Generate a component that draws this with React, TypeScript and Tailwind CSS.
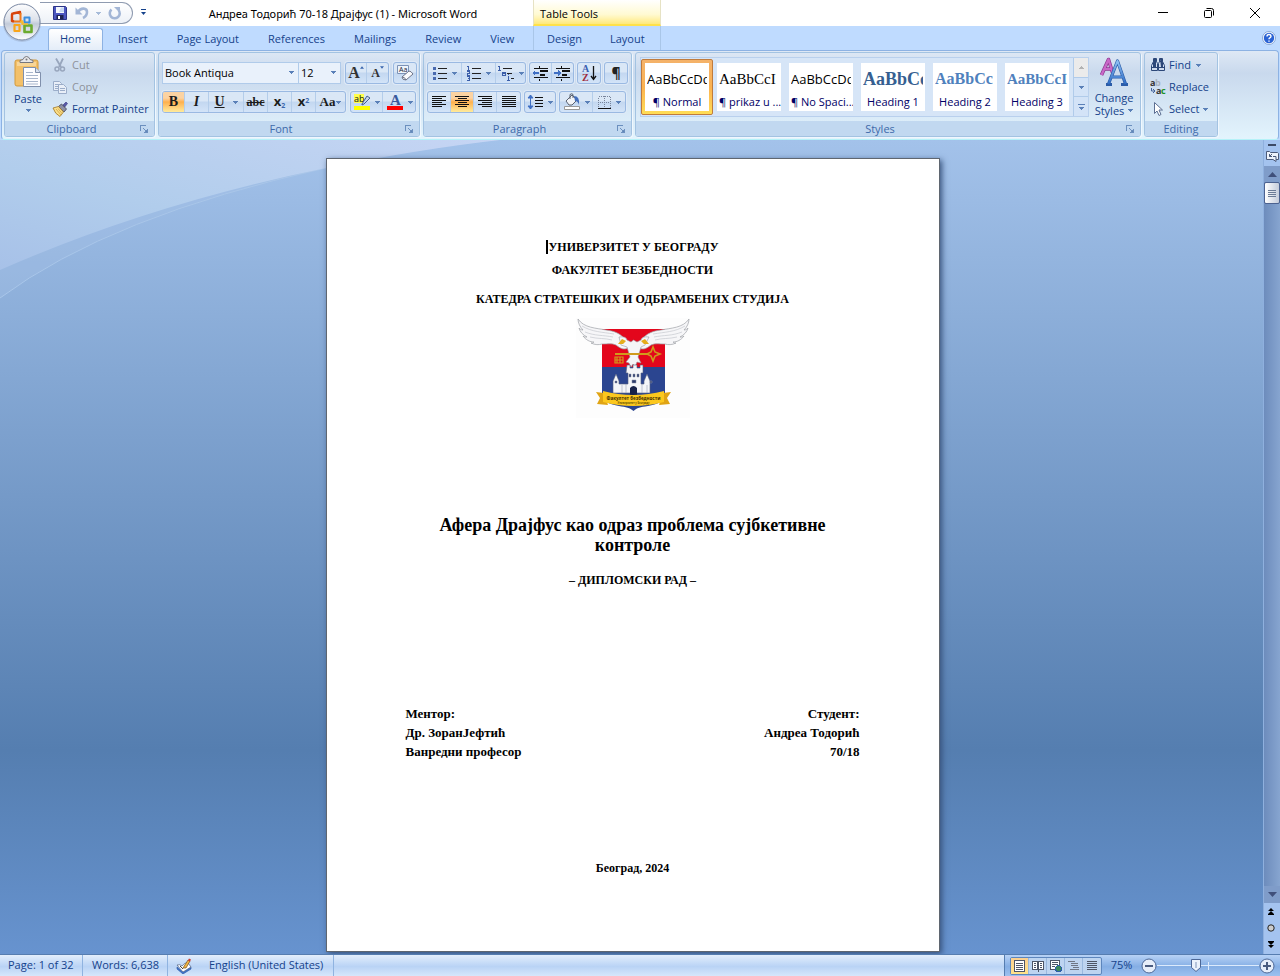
import React from 'react';

const UI_FONT = "font-['Open_Sans','Noto_Sans',sans-serif]";

/* ---------- shared bits ---------- */

const Caret = ({ className = '' }: { className?: string }) => (
  <svg className={`w-[5px] h-[3px] shrink-0 ${className}`} viewBox="0 0 5 3" fill="#5a80b8" shapeRendering="crispEdges">
    <path d="M0 0h5v1H4v1H3v1H2V2H1V1H0z" />
  </svg>
);

interface GroupProps {
  label: string;
  launcher?: boolean;
  className?: string;
  children: React.ReactNode;
}

const Group: React.FC<GroupProps> = ({ label, launcher = true, className = '', children }) => (
  <section
    aria-label={label}
    className={`flex flex-col shrink-0 h-[85px] rounded-[3px] border border-[#a3c3e2] shadow-[1px_1px_0_#f0f7fe] overflow-hidden ${className}`}
  >
    <div className="flex-1 min-h-0">{children}</div>
    <div className="flex items-center h-[15px] bg-[#c1d8f0] text-[#3e6aaa] text-[11px] leading-[15px]">
      <span className="flex-1 text-center">{label}</span>
      {launcher && (
        <button aria-label={`${label} options`} className="w-3 h-3 mr-1">
          <svg viewBox="0 0 12 12" className="w-3 h-3" fill="none" stroke="#6b8fbe" shapeRendering="crispEdges">
            <path d="M2.500 8V2.500H8M5.500 9.500h4v-4M5 5l4 4" />
            <path d="M7 7h2v2H7z" fill="#5f86b8" />
          </svg>
        </button>
      )}
    </div>
  </section>
);

const ButtonBar = ({ children }: { children: React.ReactNode }) => (
  <div className="flex h-[22px] border border-[#9ab9e2] rounded-[3px] overflow-hidden divide-x divide-[#b4cdea] bg-gradient-to-b from-[#dae7f6] from-45% via-[#c3d7f0] via-50% to-[#d3e4f8] shadow-[0_0_0_1px_#dfeaf7]">
    {children}
  </div>
);

interface ToolProps {
  label: string;
  active?: boolean;
  caret?: boolean;
  className: string;
  children: React.ReactNode;
}

const Tool: React.FC<ToolProps> = ({ label, active, caret, className, children }) => (
  <button
    aria-label={label}
    title={label}
    className={`flex items-center justify-center gap-1 shrink-0 ${className} ${active ? 'bg-gradient-to-b from-[#fcd3a2] from-30% via-[#fdb04d] via-50% to-[#feeb9b]' : ''}`}
  >
    {children}
    {caret && <Caret />}
  </button>
);

/* ---------- icons ---------- */

const Lines = ({ rows }: { rows: [number, number][] }) => (
  <svg className="w-4 h-[14px]" viewBox="0 0 16 14" shapeRendering="crispEdges" fill="#111">
    {rows.map(([x, w], i) => (
      <rect key={i} x={x} y={1 + i * 2} width={w} height="1" />
    ))}
  </svg>
);

const LEFT: [number, number][] = [[1, 14], [1, 10], [1, 14], [1, 10], [1, 14], [1, 10]];
const CENTER: [number, number][] = [[1, 14], [4, 9], [1, 14], [4, 9], [1, 14], [4, 9]];
const RIGHT: [number, number][] = [[1, 14], [5, 10], [1, 14], [5, 10], [1, 14], [5, 10]];
const FULL: [number, number][] = [[1, 14], [1, 14], [1, 14], [1, 14], [1, 14], [1, 14]];

const OfficeLogo = () => (
  <svg viewBox="0 0 44 44" className="w-11 h-11">
    <defs>
      <linearGradient id="orb" x1="0" y1="0" x2="0" y2="1">
        <stop offset="0" stopColor="#fdfdfe" />
        <stop offset="0.45" stopColor="#dce1ea" />
        <stop offset="0.55" stopColor="#c3cbd9" />
        <stop offset="1" stopColor="#ffffff" />
      </linearGradient>
    </defs>
    <circle cx="22" cy="23" r="19" fill="#8d9bb3" opacity="0.35" />
    <circle cx="22" cy="22" r="18" fill="url(#orb)" stroke="#7d8ba5" />
    <g fill="none" strokeLinejoin="round">
      <path d="M20 14.500V12l-7 1.500q-1 0-1 1V21l2 .500" stroke="#d8430c" strokeWidth="2.400" />
      <path d="M14 21.500h6.500V13" stroke="#f07a1c" strokeWidth="2" />
      <path d="M24.500 17.500h5v5h-5z" stroke="#3b8ede" strokeWidth="2" />
      <path d="M14.500 25h5v6h-5z" stroke="#f8a51b" strokeWidth="2.200" />
      <path d="M24.500 25.500h7v6.500h-7z" stroke="#6bab2f" strokeWidth="2.600" />
    </g>
    <path d="M20 22h3v3M22 20v4h6" fill="none" stroke="#f5b933" strokeWidth="1.500" />
  </svg>
);

const SaveIcon = () => (
  <svg viewBox="0 0 16 16" className="w-4 h-4">
    <path d="M1.500 1.500h12l1 1v12h-13z" fill="#4c56c0" stroke="#2c3487" />
    <path d="M4 2h8v6H4z" fill="#f4f7fd" />
    <path d="M9 2.500h3V7H7z" fill="#c8d8f2" />
    <path d="M4.500 10h7v4.500h-7z" fill="#1d2250" />
    <path d="M6 11h2v3H6z" fill="#fff" />
  </svg>
);

const UndoIcon = () => (
  <svg viewBox="0 0 16 16" className="w-4 h-4" fill="none">
    <path d="M4 7c3-5 9-4 9 0 0 3-2 5-4 6" stroke="#a3b6d6" strokeWidth="2.600" />
    <path d="M1.500 2.500v7h7z" fill="#a3b6d6" />
  </svg>
);

const RedoIcon = () => (
  <svg viewBox="0 0 16 16" className="w-4 h-4" fill="none">
    <path d="M4.500 4.500A5 5 0 1 0 11.500 5" stroke="#a3b6d6" strokeWidth="2.600" />
    <path d="M7 2h6v6z" fill="#a3b6d6" />
  </svg>
);

const PasteIcon = () => (
  <svg viewBox="0 0 28 32" className="w-7 h-8">
    <rect x="1" y="4" width="23" height="26" rx="2" fill="#f3c069" stroke="#d39a3c" />
    <path d="M3 6h19v4H3z" fill="#f8d596" />
    <path d="M6 6.500V4.500l3-1q1-3 3.500-3t3.500 3l3 1v2z" fill="#e8e8ea" stroke="#77777c" />
    <circle cx="12.500" cy="3.500" r="1" fill="#77777c" />
    <path d="M9.500 11.500h12l5 5v14h-17z" fill="#fdfdff" stroke="#8090ac" />
    <path d="M21.500 11.500v5h5" fill="#d6e0f0" stroke="#8090ac" />
    <path d="M12 16.500h7M12 19.500h12M12 22.500h12M12 25.500h12M12 28h12" stroke="#a8b6cc" />
  </svg>
);

const CutIcon = () => (
  <svg viewBox="0 0 16 16" className="w-4 h-4" fill="none" stroke="#98a6bd">
    <path d="M4 1.500l5 8.500M11 1.500L7 10" strokeWidth="1.800" />
    <circle cx="5" cy="12" r="2" strokeWidth="1.500" />
    <circle cx="10.500" cy="12" r="2" strokeWidth="1.500" />
  </svg>
);

const CopyIcon = () => (
  <svg viewBox="0 0 16 16" className="w-4 h-4" fill="#e9eff8" stroke="#9badc9">
    <path d="M1.500 2.500h6l2 2v7h-8z" />
    <path d="M3 5.500h4M3 7.500h4M3 9.500h3" />
    <path d="M6.500 5.500h5l3 3v6h-8z" />
    <path d="M8 9.500h5M8 11.500h5" />
  </svg>
);

const PainterIcon = () => (
  <svg viewBox="0 0 16 16" className="w-4 h-4">
    <path d="M10 5l4-4 1.500 1.500L12 7z" fill="#5858a8" stroke="#38387c" strokeWidth="0.600" />
    <path d="M6.500 5.500l3-2.500 5 5-2.500 3z" fill="#8d90a4" stroke="#3c3f52" strokeWidth="0.800" />
    <path d="M1 7l5.500-1.500 5 5.500L8 15.500Q3 13 1 7z" fill="#fbe08a" stroke="#a07522" strokeWidth="0.800" />
    <path d="M4 8l5 6M6 7.500l4 5" stroke="#c9983a" strokeWidth="0.700" />
  </svg>
);

const EraserIcon = () => (
  <svg viewBox="0 0 18 18" className="w-[18px] h-[18px]">
    <path d="M1.500 1.500h11v8h-11z" fill="#eef4fc" stroke="#7c93b7" />
    <text x="3" y="8" fontSize="7" fill="#223" fontFamily="Open Sans, sans-serif">Aa</text>
    <path d="M6 13l7-6q2 0 4 3l-7 6q-4 0-4-3z" fill="#fbfbfd" stroke="#6e7487" />
    <path d="M6 13q3 0 4 3" fill="none" stroke="#6e7487" />
  </svg>
);

const HighlightIcon = () => (
  <svg viewBox="0 0 18 18" className="w-[18px] h-[18px]">
    <path d="M1 1h10v9H1z" fill="#ffff4d" />
    <text x="1" y="9" fontSize="9" fill="#111" fontFamily="Open Sans, sans-serif">ab</text>
    <path d="M9 11l5-8 3 2-6 6-2 1z" fill="#c5d4ec" stroke="#45608f" />
    <path d="M1 13h16v4H1z" fill="#ffff00" />
  </svg>
);

const FontColorIcon = () => (
  <svg viewBox="0 0 18 18" className="w-[18px] h-[18px]">
    <text x="4" y="12" fontSize="15" fontWeight="bold" fill="#38599c" fontFamily="Liberation Serif, serif">A</text>
    <path d="M1 13h16v4H1z" fill="#ff0000" />
  </svg>
);

const BulletsIcon = () => (
  <svg viewBox="0 0 16 16" className="w-4 h-4" shapeRendering="crispEdges">
    <path d="M1 2h3v3H1zM1 7h3v3H1zM1 12h3v3H1z" fill="#4a6bb0" />
    <path d="M6 3h9v1H6zM6 8h9v1H6zM6 13h9v1H6z" fill="#222" />
  </svg>
);

/* digits are only a few pixels high, so they are drawn as strokes */
const NumberingIcon = () => (
  <svg viewBox="0 0 16 16" className="w-4 h-4" shapeRendering="crispEdges">
    <path d="M2.500 1v4M1 1.500h2M1 5.500h3M1 6.500h2.500v2H1.500v2H4M1 11.500h2.500v4H1M1.500 13.500h2" fill="none" stroke="#3b5ea9" />
    <path d="M6 3h9v1H6zM6 8h9v1H6zM6 13h9v1H6z" fill="#222" />
  </svg>
);

const MultilevelIcon = () => (
  <svg viewBox="0 0 18 16" className="w-[18px] h-4" shapeRendering="crispEdges">
    <path d="M2.500 1v4M1 1.500h2M1 5.500h3M5 7.500h3v3H5.500v-2H8M11.500 9v1M11.500 11v4M10 15.500h3" fill="none" stroke="#3b5ea9" />
    <path d="M6 3h9v1H6zM10 8h5v1h-5zM14 13h3v1h-3z" fill="#222" />
  </svg>
);

const IndentIcon = ({ right }: { right?: boolean }) => (
  <svg viewBox="0 0 17 15" className="w-[17px] h-[15px]" shapeRendering="crispEdges">
    <path d="M2 2h14v1H2zM8 4h8v2H8zM8 8h5v2H8zM2 11h14v1H2zM7 0h1v2H7zM7 13h1v2H7z" fill="#111" />
    {right ? (
      <path d="M7 7L4 4v2H0v2h4v2z" fill="#3f6fc4" />
    ) : (
      <path d="M0 7l3-3v2h4v2H3v2z" fill="#3f6fc4" />
    )}
  </svg>
);

const SortIcon = () => (
  <svg viewBox="0 0 17 18" className="w-[17px] h-[18px]">
    <g fontSize="10" fontWeight="bold" fontFamily="Liberation Serif, serif">
      <text x="1" y="8" fill="#3a5fb0">A</text>
      <text x="1" y="17" fill="#a02c3c">Z</text>
    </g>
    <path d="M12.500 2v13M10 12l2.500 3.500L15 12" fill="none" stroke="#111" strokeWidth="1.300" />
  </svg>
);

const SpacingIcon = () => (
  <svg viewBox="0 0 17 16" className="w-[17px] h-4">
    <path d="M3.500 1v14M1 4l2.500-3L6 4zM1 12l2.500 3L6 12z" fill="#3f6fc4" stroke="#3f6fc4" />
    <path d="M8 3h8v1H8zM8 6h8v1H8zM8 9h8v1H8zM8 12h8v1H8z" fill="#111" />
  </svg>
);

const ShadingIcon = () => (
  <svg viewBox="0 0 18 18" className="w-[18px] h-[18px]">
    <path d="M3 8l6-6 5 5-5 5H6z" fill="#f2f4f8" stroke="#59616f" />
    <path d="M7 6V1.500q2-1.500 3 0V5" fill="none" stroke="#59616f" />
    <path d="M11 3q6 0 5 9-1-4-4-4z" fill="#4470bd" />
    <path d="M1.500 13.500h15v3h-15z" fill="#fff" stroke="#999" />
  </svg>
);

const BordersIcon = () => (
  <svg viewBox="0 0 15 15" className="w-[15px] h-[15px]" shapeRendering="crispEdges">
    <path d="M1.500 1.500h12v12h-12zM7.500 1v12M1 7.500h12" fill="none" stroke="#77839a" strokeDasharray="1 1" />
    <path d="M1 13h13v1H1z" fill="#111" />
  </svg>
);

const FindIcon = () => (
  <svg viewBox="0 0 16 16" className="w-4 h-4" fill="#cfdbed" stroke="#2c4778">
    <path d="M3.500 1.500h3v3l1 2v7h-6v-5l2-4zM12.500 1.500h-3v3l-1 2v7h6v-5l-2-4z" />
    <path d="M3.500 4.500h3M9.500 4.500h3M7 7.500h2M1.500 10.500h6M8.500 10.500h6" />
    <path d="M4 2h2v8H3V6zM10 2h2l1 4v4h-2z" fill="#2c4778" stroke="none" />
  </svg>
);

const ReplaceIcon = () => (
  <svg viewBox="0 0 16 16" className="w-4 h-4">
    <g fontSize="9" fontWeight="bold" fontFamily="Open Sans, sans-serif">
      <text x="0" y="7" fill="#333">a</text>
      <text x="5" y="7" fill="#aab2bf">b</text>
      <text x="6" y="15" fill="#333">a</text>
      <text x="11" y="15" fill="#1d8f26">c</text>
    </g>
    <path d="M1.500 9v3H4M3 10l2 2-2 2" fill="none" stroke="#44639a" />
  </svg>
);

const SelectIcon = () => (
  <svg viewBox="0 0 16 16" className="w-4 h-4">
    <path d="M4.500 1.500v11l2.500-2.500 2 4.500 2-1-2-4.500h3.500z" fill="#fff" stroke="#5c6f92" />
  </svg>
);

const ChangeStylesIcon = () => (
  <svg viewBox="0 0 30 30" className="w-[30px] h-[30px]">
    <defs>
      <linearGradient id="blueA" x1="0" y1="0" x2="0" y2="1">
        <stop offset="0" stopColor="#8fc0f5" />
        <stop offset="1" stopColor="#2e6cc4" />
      </linearGradient>
    </defs>
    <g fill="none" strokeLinejoin="round">
      <path d="M2.500 18L9.500 2.500l4 13M6 12h6" stroke="#8d3a90" strokeWidth="3.600" />
      <path d="M2.500 18L9.500 2.500l4 13M6 12h6" stroke="#c968c8" strokeWidth="2.200" />
      <path d="M9.500 27L18.500 4l8 23M13 20h11M7 27.500h6M22 27.500h7" stroke="#2b5ca8" strokeWidth="3.200" />
      <path d="M9.500 27L18.500 4l8 23M13 20h11" stroke="url(#blueA)" strokeWidth="2" />
    </g>
  </svg>
);

const Wing = () => (
  <g>
    <path d="M50 22C44 15 38 13 30 12 20 10 8 10 2 1c0 4 2 8 5 11-2 0-3-1-4-2 1 4 4 7 8 9-2 0-3 0-4-1 3 4 7 6 11 6-1 1-2 1-3 1 4 2 8 2 11 1 6 0 10-1 14 1 5 4 8 5 12 3z" fill="#f6f6f8" stroke="#9ea0a6" strokeWidth="0.700" />
    <path d="M6 8c10 6 20 6 32 8M9 14c10 4 18 3 28 5M14 19c8 2 15 1 22 3" fill="none" stroke="#c6c8ce" strokeWidth="0.700" />
  </g>
);

const Emblem = () => (
  <svg role="img" aria-label="Факултет безбедности" viewBox="0 0 114 100" className="w-[114px] h-[100px] bg-[#fdfdfd]">
    <path d="M26 11h63v40H26z" fill="#e3061c" />
    <path d="M26 49h63v26c0 9-8 11-17 13-8 1-11 2-14.500 5C54 90 50 89 43 88c-9-2-17-4-17-13z" fill="#2b4590" />
    <g>
      <Wing />
      <g transform="translate(115 0) scale(-1 1)">
        <Wing />
      </g>
    </g>
    <path d="M43 19q7-1 8 3l4 2 2.500-2 3.500 2 4-2q1-4 8-3l-4 8-4 2-3 10 3 6-4-1-2 5-2-3-2 3-2-4-3-1 4-5-3-10-6-2z" fill="#f5f5f7" stroke="#9798a0" strokeWidth="0.600" />
    <path d="M42 26l4-5 4 2-3 3zM73 26l-4-5-4 2 3 3z" fill="#e5ad1c" />
    <g fill="none" stroke="#d09a1c">
      <path d="M39 36h34" strokeWidth="2" />
      <path d="M39 39h8v6h-8zM41 39v6M44 39v6M39 42h8" strokeWidth="1.200" />
      <path d="M71 36l4-2 2-5 2 5 5 2-5 2-2 5-2-5z" fill="#e3061c" strokeWidth="1.600" />
    </g>
    <path d="M51 47h3v3h3v-3h4v3h3v-3h3v8h-2v11h3v-3l3-7 3 7v12H37V63l3-7 3 7v3h9V55h-2z" fill="#f4f5f8" stroke="#555f7c" strokeWidth="0.600" />
    <path d="M53 56h2v3h-2zM57 56h2v3h-2zM61 56h2v3h-2zM56 62h4v3h-4zM46 67v8M50 66v9M66 66v9M71 67v8M39 63h2v2h-2zM74 63h2v2h-2z" fill="#2b3a6a" stroke="#8b93a8" strokeWidth="0.500" />
    <path d="M54 77v-7q3.500-4 7 0v7z" fill="#17224a" />
    <path d="M28 75l-8-1 4 6-3 6 11 1zM87 75l8-1-4 6 3 6-11 1z" fill="#e0a414" />
    <path d="M27 73q30 8 61 0v11q-31 8-61 0z" fill="#fcc81e" />
    <text x="57.500" y="82" textAnchor="middle" fontSize="4.500" fontWeight="bold" fill="#3c2d00" fontFamily="Open Sans, sans-serif">Факултет безбедности</text>
    <text x="57.500" y="86" textAnchor="middle" fontSize="2.500" fill="#6a5200" fontFamily="Open Sans, sans-serif">Универзитет у Београду</text>
  </svg>
);

/* ---------- window chrome ---------- */

const TitleBar = () => (
  <header className="flex h-[26px] shrink-0 bg-white text-[11px] text-black">
    <div className="flex items-start w-[153px] shrink-0 pl-10 pt-[2px]">
      <div className="flex items-center h-[22px] w-[93px] pl-3 gap-[6px] border border-l-0 border-[#8f9bb0] rounded-r-full bg-gradient-to-b from-white to-[#edf1f7]">
        <button aria-label="Save"><SaveIcon /></button>
        <button aria-label="Undo" className="flex items-center gap-[6px]">
          <UndoIcon />
          <Caret className="opacity-50" />
        </button>
        <button aria-label="Repeat"><RedoIcon /></button>
      </div>
      <button aria-label="Customize Quick Access Toolbar" className="w-5 h-5 flex flex-col items-center justify-center gap-[2px]">
        <span className="w-[5px] h-px bg-[#15428b]" />
        <svg viewBox="0 0 5 3" className="w-[5px] h-[3px]"><path d="M0 0h5L2.500 3z" fill="#15428b" /></svg>
      </button>
    </div>
    <h1 className="w-[380px] shrink-0 text-center leading-7 font-['Noto_Sans',sans-serif]">Андреа Тодорић 70-18 Драјфус (1) - Microsoft Word</h1>
    <div className="w-[128px] shrink-0 pl-[6px] leading-7 bg-gradient-to-b from-white via-[#fffad2] via-60% to-[#ffe97a] border-x border-[#e6e2c4] border-b-2 border-b-[#ffe14a]">
      Table Tools
    </div>
    <div className="flex-1" />
    <div className="flex pr-[2px]">
      <button aria-label="Minimize" className="w-[46px] flex items-center justify-center">
        <svg viewBox="0 0 10 10" className="w-[10px] h-[10px]" stroke="#000"><path d="M0 4.500h10" /></svg>
      </button>
      <button aria-label="Restore" className="w-[46px] flex items-center justify-center">
        <svg viewBox="0 0 10 10" className="w-[10px] h-[10px]" fill="none" stroke="#000">
          <rect x="0.500" y="2.500" width="7" height="7" rx="1" />
          <path d="M2.500.5h5q2 0 2 2v5" />
        </svg>
      </button>
      <button aria-label="Close" className="w-[46px] flex items-center justify-center">
        <svg viewBox="0 0 10 10" className="w-[10px] h-[10px]" stroke="#000"><path d="M0 0l10 10M10 0L0 10" /></svg>
      </button>
    </div>
  </header>
);

const TABS = ['Insert', 'Page Layout', 'References', 'Mailings', 'Review', 'View'];

const TabRow = () => (
  <nav className="flex h-6 shrink-0 bg-[#bfdbff] text-[11px] text-[#15428b]">
    <div className="flex gap-px w-[533px] shrink-0 pl-12">
      <button className="h-[22px] mt-[2px] w-[55px] shrink-0 rounded-t-[3px] border border-b-0 border-[#8db2e3] bg-gradient-to-b from-white to-[#e4edf8]">Home</button>
      {TABS.map((tab) => (
        <button key={tab} className="px-[14px] pt-[2px] whitespace-nowrap">{tab}</button>
      ))}
    </div>
    <div className="flex gap-[2px] w-[128px] shrink-0 border-x border-[#a9c6e8]">
      <button className="px-[13px] pt-[2px]">Design</button>
      <button className="px-[13px] pt-[2px]">Layout</button>
    </div>
    <div className="flex-1" />
    <button aria-label="Help" className="w-[22px] flex items-center justify-center">
      <svg viewBox="0 0 14 14" className="w-[14px] h-[14px]">
        <circle cx="7" cy="7" r="6.500" fill="#fff" stroke="#8aa9d6" />
        <circle cx="7" cy="7" r="5.200" fill="#2a62d4" />
        <path d="M5 5.500q0-2 2-2t2 1.800q0 1-1.200 1.600-.8.400-.8 1.300M7 9.500v1.300" fill="none" stroke="#fff" strokeWidth="1.400" />
      </svg>
    </button>
  </nav>
);

/* ---------- ribbon groups ---------- */

const Clipboard = () => (
  <Group label="Clipboard" className="w-[151px]">
    <div className="flex">
      <button className="w-[46px] flex flex-col items-center pt-[3px] leading-4">
        <PasteIcon />
        <span className="mt-[3px]">Paste</span>
        <Caret className="mt-[2px]" />
      </button>
      <div className="flex flex-col pt-px pl-px">
        <button disabled className="flex items-center gap-1 h-[22px] text-[#8d929b]"><CutIcon />Cut</button>
        <button disabled className="flex items-center gap-1 h-[22px] text-[#8d929b]"><CopyIcon />Copy</button>
        <button className="flex items-center gap-1 h-[22px] whitespace-nowrap"><PainterIcon />Format Painter</button>
      </div>
    </div>
  </Group>
);

const Combo = ({ label, value, options, className }: { label: string; value: string; options: string[]; className: string }) => (
  <div className={`relative h-[22px] border border-[#b0cbea] bg-[#e9f1fb] ${className}`}>
    <select aria-label={label} defaultValue={value} className="appearance-none w-full h-full pl-[2px] pr-4 bg-transparent text-black outline-none">
      {options.map((o) => <option key={o}>{o}</option>)}
    </select>
    <Caret className="absolute right-1 top-2 pointer-events-none" />
  </div>
);

const FontGroup = () => (
  <Group label="Font" className="w-[262px]">
    <div className="flex flex-col gap-[7px] pl-[3px] pt-[9px]">
      <div className="flex">
        <Combo label="Font" value="Book Antiqua" options={['Book Antiqua', 'Calibri', 'Cambria']} className="w-[137px]" />
        <Combo label="Font Size" value="12" options={['10', '11', '12', '14']} className="w-[42px] border-l-0" />
        <div className="flex gap-1 pl-1">
          <ButtonBar>
            <Tool label="Grow Font" className="w-[21px]">
              <span className="font-['Liberation_Serif',serif] font-bold text-base leading-5 text-[#333]">A</span>
              <svg viewBox="0 0 5 3" className="w-1 h-[3px] -ml-1 mb-3"><path d="M0 3h5L2.500 0z" fill="#3a66ad" /></svg>
            </Tool>
            <Tool label="Shrink Font" className="w-[21px]">
              <span className="font-['Liberation_Serif',serif] font-bold text-xs leading-5 text-[#333]">A</span>
              <svg viewBox="0 0 5 3" className="w-1 h-[3px] -ml-1 mb-3"><path d="M0 0h5L2.500 3z" fill="#3a66ad" /></svg>
            </Tool>
          </ButtonBar>
          <ButtonBar>
            <Tool label="Clear Formatting" className="w-[22px]"><EraserIcon /></Tool>
          </ButtonBar>
        </div>
      </div>
      <div className="flex gap-1 font-['Liberation_Serif',serif] text-[#1c1c1c]">
        <ButtonBar>
          <Tool label="Bold" active className="w-[22px]"><b className="text-sm">B</b></Tool>
          <Tool label="Italic" className="w-6"><i className="text-sm font-bold">I</i></Tool>
          <Tool label="Underline" caret className="w-[35px]"><u className="text-sm font-bold pr-1">U</u></Tool>
          <Tool label="Strikethrough" className="w-6"><s className="text-xs font-bold">abc</s></Tool>
          <Tool label="Subscript" className="w-6">
            <span className="font-['Open_Sans',sans-serif] font-bold text-[13px]">x<sub className="text-[7px] text-[#3a66ad]">2</sub></span>
          </Tool>
          <Tool label="Superscript" className="w-6">
            <span className="font-['Open_Sans',sans-serif] font-bold text-[13px]">x<sup className="text-[7px] text-[#3a66ad]">2</sup></span>
          </Tool>
          <Tool label="Change Case" caret className="w-[29px]"><span className="text-[13px] font-bold -mr-[3px]">Aa</span></Tool>
        </ButtonBar>
        <ButtonBar>
          <Tool label="Text Highlight Color" caret className="w-8"><HighlightIcon /></Tool>
          <Tool label="Font Color" caret className="w-8"><FontColorIcon /></Tool>
        </ButtonBar>
      </div>
    </div>
  </Group>
);

const Paragraph = () => (
  <Group label="Paragraph" className="w-[209px]">
    <div className="flex flex-col gap-[7px] pl-[3px] pt-[9px]">
      <div className="flex gap-[3px]">
        <ButtonBar>
          <Tool label="Bullets" caret className="w-[34px]"><BulletsIcon /></Tool>
          <Tool label="Numbering" caret className="w-[34px]"><NumberingIcon /></Tool>
          <Tool label="Multilevel List" caret className="w-[29px]"><MultilevelIcon /></Tool>
        </ButtonBar>
        <ButtonBar>
          <Tool label="Decrease Indent" className="w-[22px]"><IndentIcon /></Tool>
          <Tool label="Increase Indent" className="w-[21px]"><IndentIcon right /></Tool>
        </ButtonBar>
        <ButtonBar>
          <Tool label="Sort" className="w-[22px]"><SortIcon /></Tool>
        </ButtonBar>
        <ButtonBar>
          <Tool label="Show/Hide" className="w-[22px]"><span className="text-sm text-[#222] font-bold">¶</span></Tool>
        </ButtonBar>
      </div>
      <div className="flex gap-[3px]">
        <ButtonBar>
          <Tool label="Align Left" className="w-[23px]"><Lines rows={LEFT} /></Tool>
          <Tool label="Center" active className="w-[23px]"><Lines rows={CENTER} /></Tool>
          <Tool label="Align Right" className="w-[23px]"><Lines rows={RIGHT} /></Tool>
          <Tool label="Justify" className="w-[23px]"><Lines rows={FULL} /></Tool>
        </ButtonBar>
        <ButtonBar>
          <Tool label="Line Spacing" caret className="w-[30px]"><SpacingIcon /></Tool>
        </ButtonBar>
        <ButtonBar>
          <Tool label="Shading" caret className="w-[33px]"><ShadingIcon /></Tool>
          <Tool label="Borders" caret className="w-[32px]"><BordersIcon /></Tool>
        </ButtonBar>
      </div>
    </div>
  </Group>
);

const STYLES = [
  { name: '¶ Normal', sample: 'AaBbCcDd', look: "text-[13px] text-black", active: true },
  { name: '¶ prikaz u ...', sample: 'AaBbCcI', look: "text-[15px] text-black font-['Liberation_Serif',serif]" },
  { name: '¶ No Spaci...', sample: 'AaBbCcDd', look: "text-[13px] text-black" },
  { name: 'Heading 1', sample: 'AaBbCc', look: "text-lg font-bold text-[#365f91] font-['Liberation_Serif',serif]" },
  { name: 'Heading 2', sample: 'AaBbCc', look: "text-base font-bold text-[#4f81bd] font-['Liberation_Serif',serif]" },
  { name: 'Heading 3', sample: 'AaBbCcI', look: "text-[15px] font-bold text-[#4f81bd] font-['Liberation_Serif',serif]" },
];

const StylesGroup = () => (
  <Group label="Styles" className="w-[506px]">
    <div className="flex pl-1 pt-[4px]">
      <div className="flex border border-[#b9d0ed] bg-[#d6e5f7] h-[60px]">
        {STYLES.map((s) => (
          <button
            key={s.name}
            className={`w-[72px] h-[56px] mt-px p-[3px] rounded-[2px] border ${s.active ? 'border-[#c07b3c] bg-gradient-to-b from-[#f4b26a] via-[#fbb250] to-[#ffdd55]' : 'border-transparent'}`}
          >
            <span className="flex flex-col h-full px-[2px] bg-white overflow-hidden">
              <span className={`h-8 pt-px leading-[30px] text-left overflow-hidden whitespace-nowrap ${s.look}`}>{s.sample}</span>
              <span className="text-[11px] leading-[14px] text-center text-[#000066] whitespace-nowrap">{s.name}</span>
            </span>
          </button>
        ))}
        <div className="flex flex-col w-[15px] border-l border-[#b0cbea] divide-y divide-[#b0cbea]">
          <button aria-label="Scroll up" className="flex-1 flex items-center justify-center bg-[#ebebeb]"><Caret className="rotate-180 opacity-50 grayscale" /></button>
          <button aria-label="Scroll down" className="flex-1 flex items-center justify-center bg-[#d3e3f7]"><Caret /></button>
          <button aria-label="More styles" className="flex-1 flex flex-col gap-[2px] items-center justify-center bg-[#d3e3f7]">
            <span className="w-[7px] h-px bg-[#5a80b8]" />
            <Caret />
          </button>
        </div>
      </div>
      <button className="flex-1 flex flex-col items-center pr-px leading-[13px]">
        <ChangeStylesIcon />
        <span className="mt-1">Change</span>
        <span className="flex items-center gap-1">Styles<Caret /></span>
      </button>
    </div>
  </Group>
);

const Editing = () => (
  <Group label="Editing" launcher={false} className="w-[74px]">
    <div className="flex flex-col pt-px pl-[5px]">
      <button className="flex items-center gap-[3px] h-[22px]"><FindIcon />Find<Caret className="ml-[2px]" /></button>
      <button className="flex items-center gap-[3px] h-[22px]"><ReplaceIcon />Replace</button>
      <button className="flex items-center gap-[3px] h-[22px]"><SelectIcon />Select<Caret className="ml-px" /></button>
    </div>
  </Group>
);

const Ribbon = () => (
  <div className="shrink-0 h-[90px] px-px bg-[#bfdbff]">
    <div className="flex gap-[3px] h-[90px] pl-[2px] pt-px border border-[#8db2e3] border-b-[#b5f2f8] rounded-[4px] text-[11px] text-[#15428b] bg-gradient-to-b from-[#dee8f5] via-[#c9d9ed] via-25% to-[#e3f4fd]">
      <Clipboard />
      <FontGroup />
      <Paragraph />
      <StylesGroup />
      <Editing />
    </div>
  </div>
);

/* ---------- document ---------- */

const SIGNATURES = [
  ['Ментор:', 'Студент:'],
  ['Др. ЗоранЈефтић', 'Андреа Тодорић'],
  ['Ванредни професор', '70/18'],
];

const Page = () => (
  <article className="w-[614px] h-[794px] shrink-0 mt-[18px] px-[79px] pt-[77px] bg-white border border-[#5f6670] shadow-[2px_2px_6px_#35507a] font-['Liberation_Serif',serif] font-bold text-xs leading-[23px] text-center text-black">
    <p>
      <span className="border-l-2 border-black">УНИВЕРЗИТЕТ У БЕОГРАДУ</span>
    </p>
    <p>ФАКУЛТЕТ БЕЗБЕДНОСТИ</p>
    <p className="mt-[6px]">КАТЕДРА СТРАТЕШКИХ И ОДБРАМБЕНИХ СТУДИЈА</p>
    <div className="flex justify-center mt-[7px]"><Emblem /></div>
    <h2 className="mt-[97px] text-lg leading-5">
      Афера Драјфус као одраз проблема сујбкетивне
      <br />
      контроле
    </h2>
    <p className="mt-[14px]">– ДИПЛОМСКИ РАД –</p>
    <table className="w-full mt-[112px] text-[13px] leading-[19px]">
      <tbody>
        {SIGNATURES.map(([left, right]) => (
          <tr key={left}>
            <td className="text-left">{left}</td>
            <td className="text-right">{right}</td>
          </tr>
        ))}
      </tbody>
    </table>
    <p className="mt-24">Београд, 2024</p>
  </article>
);

const ScrollColumn = () => (
  <div className="flex flex-col w-[17px] shrink-0 bg-[#a4c3ef] border-l border-[#8fb0de]">
    <div className="flex flex-col items-center gap-1 h-[26px] pt-1">
      <span className="w-2 h-[2px] bg-[#3c4a66]" />
      <svg viewBox="0 0 13 12" className="w-[13px] h-3" fill="#eef3fb" stroke="#4c5b7a">
        <path d="M.5 1.500h3l1 1h7l1 1v6H10v2l-3-2H.5z" />
        <path d="M3.500 6.500L6 4M3.500 4v2.500H6M7 6.500h3v3" fill="none" />
      </svg>
    </div>
    <button aria-label="Scroll up" className="h-[16px] flex items-center justify-center bg-[#7f9cc9]">
      <svg viewBox="0 0 9 5" className="w-[9px] h-[5px]"><path d="M0 5h9L4.500 0z" fill="#3f4f7a" /></svg>
    </button>
    <div className="flex-1 bg-[#7c9bc8] bg-gradient-to-r from-[#6d8cbc] to-[#87a5d0]">
      <div className="h-[22px] rounded-[2px] border border-[#4c6290] bg-gradient-to-r from-white to-[#c4ccdb] flex flex-col items-center justify-center gap-px">
        <span className="w-2 h-px bg-[#6b7b96]" />
        <span className="w-2 h-px bg-[#6b7b96]" />
        <span className="w-2 h-px bg-[#6b7b96]" />
        <span className="w-2 h-px bg-[#6b7b96]" />
      </div>
    </div>
    <button aria-label="Scroll down" className="h-[17px] flex items-center justify-center bg-[#7f9cc9]">
      <svg viewBox="0 0 9 5" className="w-[9px] h-[5px]"><path d="M0 0h9L4.500 5z" fill="#3f4f7a" /></svg>
    </button>
    <button aria-label="Previous Page" className="h-[17px] pr-[2px] flex items-center justify-center">
      <svg viewBox="0 0 6 8" className="w-[6px] h-2"><path d="M3 0l3 3H0zM3 3l3 3H0zM0 6h6v1H0z" /></svg>
    </button>
    <button aria-label="Select Browse Object" className="h-[16px] pr-[2px] flex items-center justify-center">
      <svg viewBox="0 0 8 8" className="w-2 h-2"><circle cx="4" cy="4" r="3.200" fill="#ccc" stroke="#222" /></svg>
    </button>
    <button aria-label="Next Page" className="h-[18px] pr-[2px] flex items-center justify-center">
      <svg viewBox="0 0 6 8" className="w-[6px] h-2"><path d="M0 0h6v1H0zM0 1h6L3 4zM0 4h6L3 7z" /></svg>
    </button>
  </div>
);

const Workspace = () => (
  <main className="relative flex-1 min-h-0 flex overflow-hidden bg-gradient-to-b from-[#a3c2ea] via-[#557eb0] via-75% to-[#6793cf]">
    <svg viewBox="0 0 640 160" className="absolute left-0 top-0 w-[640px] h-40" fill="none">
      <defs>
        <linearGradient id="swoosh" x1="0" y1="1" x2="1" y2="0">
          <stop offset="0" stopColor="#a7c1e8" />
          <stop offset="0.400" stopColor="#b1cdec" />
          <stop offset="1" stopColor="#c6d5f4" />
        </linearGradient>
      </defs>
      <path d="M0 158Q110 76 326 28Q420 9 500 0H0z" fill="#a9c5e8" opacity="0.300" />
      <path d="M0 158Q110 76 326 28" stroke="#a9c6e9" />
      <path d="M0 130Q150 64 326 28Q420 9 500 0H0z" fill="url(#swoosh)" />
    </svg>
    <div className="relative flex-1 flex justify-center items-start pl-[2px]">
      <Page />
    </div>
    <div className="relative flex"><ScrollColumn /></div>
  </main>
);

/* ---------- status bar ---------- */

const ViewButton = ({ label, active, children }: { label: string; active?: boolean; children: React.ReactNode }) => (
  <button
    aria-label={label}
    className={`w-[18px] flex items-center justify-center ${active ? 'bg-gradient-to-b from-[#fbcf8f] to-[#ffe28a]' : ''}`}
  >
    <svg viewBox="0 0 12 12" className="w-3 h-3" fill="none" stroke="#4d5566" shapeRendering="crispEdges">{children}</svg>
  </button>
);

const StatusBar = () => (
  <footer className="flex h-[22px] shrink-0 border-t border-[#567db0] text-[11px] leading-5 text-[#15428b] bg-gradient-to-b from-[#e3eefc] via-[#b9d3f5] via-55% to-[#d6e7fb]">
    <button className="w-[83px] shrink-0 pl-2 pb-[2px] text-left border-r border-[#8fb3e0]">Page: 1 of 32</button>
    <button className="w-[85px] shrink-0 pl-[9px] pb-[2px] text-left border-r border-[#8fb3e0]">Words: 6,638</button>
    <button aria-label="Proofing" className="w-8 flex items-center justify-center">
      <svg viewBox="0 0 16 16" className="w-4 h-4">
        <path d="M1 9l6 5 8-5v2l-8 5-6-5z" fill="#3f74cf" stroke="#2c559e" strokeWidth="0.600" />
        <path d="M1 7q3-1 5 1 3-4 6-3l3 4-8 5z" fill="#fff" stroke="#5c6c8a" strokeWidth="0.800" />
        <path d="M7 10l5-8 2 1-4 7z" fill="#f4b742" stroke="#74501c" strokeWidth="0.700" />
        <path d="M12.500 1.500l2 1" stroke="#d33a2c" strokeWidth="2" />
        <path d="M4 8l3 3" stroke="#444" />
      </svg>
    </button>
    <button className="w-[134px] shrink-0 pl-[9px] pb-[2px] text-left whitespace-nowrap border-r border-[#8fb3e0]">English (United States)</button>
    <div className="flex-1" />
    <div className="flex items-center w-[276px] pl-[5px] border-l border-[#567db0] bg-gradient-to-b from-[#b7d2f6] via-[#85aee4] via-55% to-[#9dc1ef]">
      <div className="flex h-[18px] border border-[#5d86bd] rounded-[2px] divide-x divide-[#9ab8de] bg-[#bdd4f0]">
        <ViewButton label="Print Layout" active>
          <path d="M.5.5h10v11H.5z" fill="#fff" />
          <path d="M2 3.500h7M2 5.500h7M2 7.500h7M2 9.500h7" />
        </ViewButton>
        <ViewButton label="Full Screen Reading">
          <path d="M.5 1.500h5v8h-5zM6.500 1.500h5v8h-5z" fill="#fff" />
          <path d="M2 3.500h2M2 5.500h2M2 7.500h2M8 3.500h2M8 5.500h2M8 7.500h2M6 9v3" />
        </ViewButton>
        <ViewButton label="Web Layout">
          <path d="M.5.5h9v9h-9z" fill="#fff" />
          <path d="M2 2.500h6M2 4.500h6M2 6.500h3" />
          <circle cx="8.500" cy="8.500" r="3" fill="#3d8a5c" stroke="#2c5ea8" />
        </ViewButton>
        <ViewButton label="Outline">
          <path d="M0 1.500h7M3 3.500h7M3 5.500h7M5 7.500h6M2 9.500h9" stroke="#6e7685" />
        </ViewButton>
        <ViewButton label="Draft">
          <path d="M1 1.500h10M1 3.500h10M1 5.500h10M1 7.500h10M1 9.500h10" />
        </ViewButton>
      </div>
      <button className="w-[39px] pb-[2px] text-center">75%</button>
      <button aria-label="Zoom Out" className="w-4 h-4 shrink-0">
        <svg viewBox="0 0 16 16" className="w-4 h-4"><circle cx="8" cy="8" r="7" fill="#e6eefa" stroke="#4c6796" /><path d="M4 7h8v2H4z" fill="#4a5c80" /></svg>
      </button>
      <div className="relative flex-1 h-5 flex items-center">
        <span className="w-full h-px bg-[#dceafc]" />
        <span className="absolute left-1/2 w-px h-2 bg-[#dceafc]" />
        <input type="range" aria-label="Zoom" min={10} max={190} defaultValue={75} className="absolute inset-0 w-full opacity-0" />
        <svg viewBox="0 0 10 13" className="absolute left-[33%] w-[10px] h-[13px] pointer-events-none">
          <path d="M.5.5h9v8L5 12.500.5 8.500z" fill="#eaf1fb" stroke="#4c6796" />
          <path d="M5 3v6" stroke="#7d93b9" />
        </svg>
      </div>
      <button aria-label="Zoom In" className="w-4 h-4 mr-[5px] shrink-0">
        <svg viewBox="0 0 16 16" className="w-4 h-4"><circle cx="8" cy="8" r="7" fill="#e6eefa" stroke="#4c6796" /><path d="M4 7h8v2H4zM7 4h2v8H7z" fill="#4a5c80" /></svg>
      </button>
    </div>
  </footer>
);

const App: React.FC = () => (
  <div className={`relative flex flex-col h-screen overflow-hidden ${UI_FONT}`}>
    <TitleBar />
    <TabRow />
    <Ribbon />
    <Workspace />
    <StatusBar />
    <button aria-label="Office Button" className="absolute left-0 top-0 w-11 h-11"><OfficeLogo /></button>
  </div>
);

export default App;
